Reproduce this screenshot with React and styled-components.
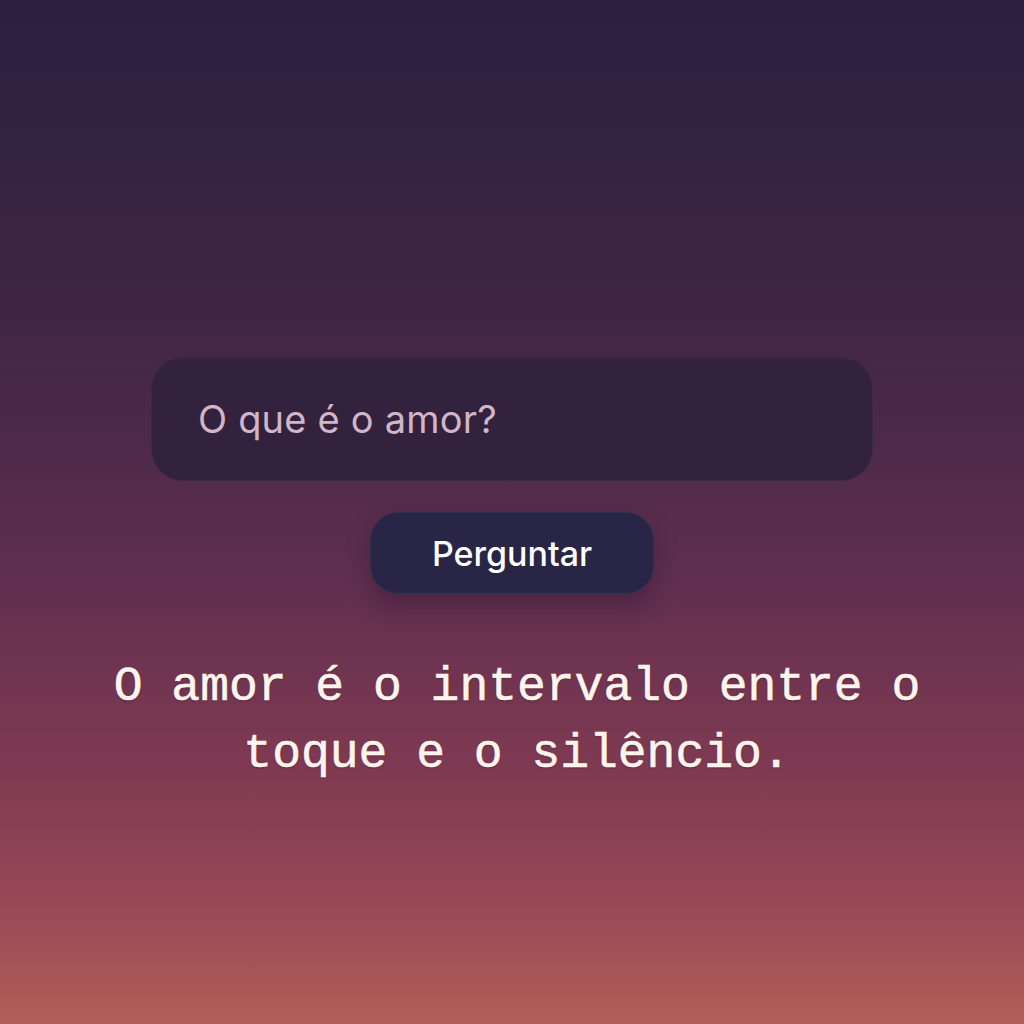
import React, { useState } from 'react'
import styled, { createGlobalStyle } from 'styled-components'

const GlobalStyle = createGlobalStyle`
  html, body {
    margin: 0;
    padding: 0;
  }
  body {
    font-family: Inter, "Noto Sans", sans-serif;
  }
`

const Page = styled.main`
  box-sizing: border-box;
  width: 100%;
  min-height: 1024px;
  padding-top: 357px;
  display: flex;
  flex-direction: column;
  align-items: center;
  background: linear-gradient(
    180deg,
    #2b2040 0%,
    #3a2542 25%,
    #4c2949 42%,
    #633050 58%,
    #7f3a52 75%,
    #974856 88%,
    #b25d56 100%
  );
`

const AskForm = styled.form`
  display: flex;
  flex-direction: column;
  align-items: center;
  gap: 31px;
`

const QuestionInput = styled.input`
  box-sizing: border-box;
  width: 722px;
  height: 124px;
  padding: 0 46px;
  border: 1px solid rgba(255, 255, 255, 0.04);
  border-radius: 32px;
  background: #33223e;
  color: #e6cfdc;
  font-family: Inter, sans-serif;
  font-size: 38px;
  font-weight: 400;
  letter-spacing: 0.2px;
  outline: none;

  &::placeholder {
    color: #d2b6c7;
    opacity: 1;
  }
`

const AskButton = styled.button`
  box-sizing: border-box;
  height: 82px;
  padding: 0 61px;
  border: 1px solid rgba(255, 255, 255, 0.05);
  border-radius: 28px;
  background: #282547;
  color: #ffffff;
  font-family: Inter, sans-serif;
  font-size: 34px;
  font-weight: 500;
  cursor: pointer;
  box-shadow: 0 12px 26px rgba(20, 10, 30, 0.3);
`

const Answer = styled.p`
  margin: 60px 0 0;
  padding-left: 10px;
  max-width: 840px;
  text-align: center;
  color: #fdf4ec;
  font-family: "Liberation Mono", "DejaVu Sans Mono", monospace;
  font-size: 48px;
  line-height: 67px;
  -webkit-text-stroke: 0.6px #fdf4ec;
  text-shadow: 0 1px 2px rgba(50, 15, 35, 0.45);
`

export default function App() {
  const [question, setQuestion] = useState('')

  return (
    <>
      <GlobalStyle />
      <Page>
        <AskForm onSubmit={(e) => e.preventDefault()}>
          <QuestionInput
            value={question}
            onChange={(e) => setQuestion(e.target.value)}
            placeholder="O que é o amor?"
          />
          <AskButton type="submit">Perguntar</AskButton>
        </AskForm>
        <Answer>
          O amor é o intervalo entre o
          <br />
          toque e o silêncio.
        </Answer>
      </Page>
    </>
  )
}
